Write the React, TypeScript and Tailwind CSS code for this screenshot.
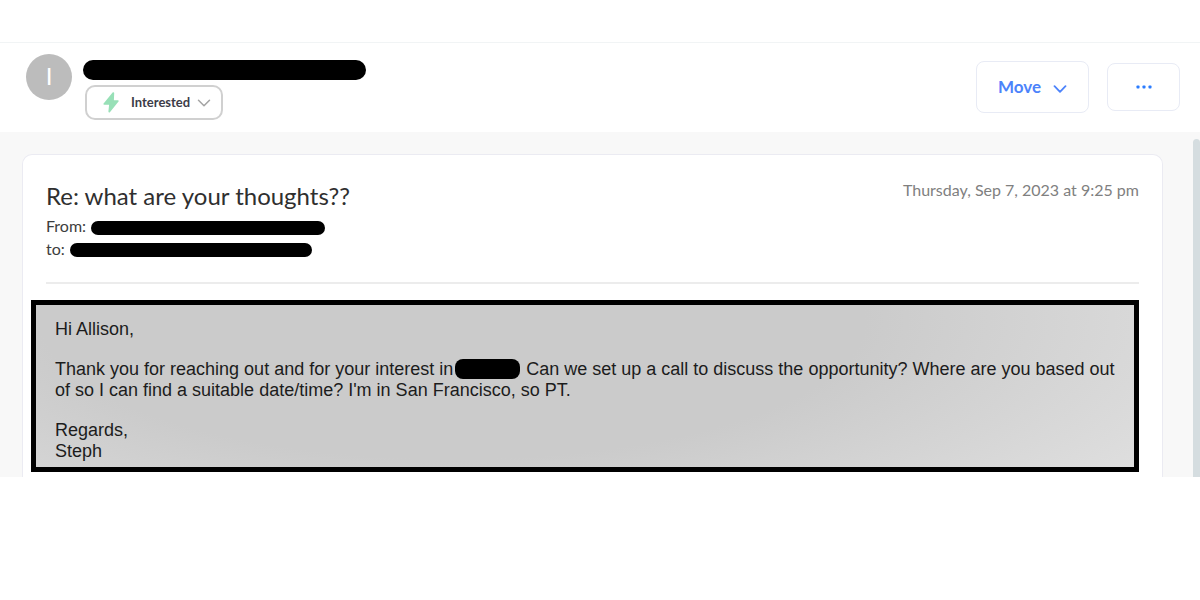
import type { ReactNode } from "react";

function Redacted({ className }: { className: string }) {
  return <span aria-label="Redacted" role="img" className={`inline-block bg-black ${className}`} />;
}

function Chevron({ className }: { className: string }) {
  return (
    <svg viewBox="0 0 14 8" fill="none" stroke="currentColor" strokeLinecap="round" strokeLinejoin="round" className={className} aria-hidden="true">
      <path d="M1.5 1.2 7 6.8l5.5-5.6" />
    </svg>
  );
}

function Header() {
  return (
    <header className="flex h-[90px] items-start justify-between border-t border-[#f1f4f5] pr-5 pl-[26px]">
      <div className="flex items-start pt-[11px]">
        <div className="flex size-[46px] items-center justify-center rounded-full bg-[#bcbcbc] pb-0.5 text-2xl text-white">I</div>
        <div className="ml-[11px] flex flex-col items-start pt-[6px]">
          <Redacted className="h-5 w-[283px] rounded-full" />
          <button
            type="button"
            className="mt-[5px] ml-0.5 flex h-[35px] items-center rounded-[10px] border-2 border-[#d0d0d0] bg-white pr-[10px] pl-4 text-[13px] font-bold text-[#3c3c48]"
          >
            <svg viewBox="0 0 16 21" className="h-[21px] w-4" aria-hidden="true">
              <path
                d="M9.6.6.6 11.4c-.5.7-.2 1.4.6 1.4h4.9L5.4 19.6c0 1 .9 1.3 1.5.6l8.6-10.6c.5-.7.2-1.4-.6-1.4h-4L11.2 1.2C11.3.2 10.2-.1 9.6.6Z"
                fill="#98e0b7"
              />
            </svg>
            <span className="ml-3">Interested</span>
            <Chevron className="ml-[7px] h-2 w-3.5 stroke-[1.5] text-[#a4a4a4]" />
          </button>
        </div>
      </div>
      <div className="flex items-center gap-[18px] pt-[18px]">
        <button
          type="button"
          className="flex h-[52px] w-[113px] items-center justify-center gap-3 rounded-lg border border-[#e8ebf5] bg-white text-[17px] font-bold text-[#4c83fb]"
        >
          Move
          <Chevron className="mt-1 h-2 w-3.5 stroke-[1.8]" />
        </button>
        <button
          type="button"
          aria-label="More actions"
          className="flex h-12 w-[73px] items-center justify-center rounded-lg border border-[#e8ebf5] bg-white text-[#2b7cff]"
        >
          <svg viewBox="0 0 16 4" fill="currentColor" className="h-1 w-4" aria-hidden="true">
            <rect x="0.5" y="0.5" width="3" height="3" rx="0.8" />
            <rect x="6.5" y="0.5" width="3" height="3" rx="0.8" />
            <rect x="12.5" y="0.5" width="3" height="3" rx="0.8" />
          </svg>
        </button>
      </div>
    </header>
  );
}

function Recipient({ label, children }: { label: string; children: ReactNode }) {
  return (
    <div className="flex h-[23px] items-center gap-[5px] text-base text-[#3d3d3d]">
      <span>{label}</span>
      {children}
    </div>
  );
}

export default function App() {
  return (
    <div className="bg-white pt-[42px] font-['Lato','Open_Sans',sans-serif]">
      <Header />
      <main className="flex items-stretch bg-[#f8f8f8] pl-[22px]">
        <article className="mt-[22px] min-w-0 flex-1 rounded-t-[10px] border border-b-0 border-[#ebebf2] bg-white pr-[23px] pb-[5px]">
          <div className="ml-[23px] border-b-2 border-[#ececec] pt-[25px] pb-[22px]">
            <div className="flex items-start justify-between">
              <h1 className="pb-0.5 text-2xl leading-8 text-[#2f2f2f]">Re: what are your thoughts??</h1>
              <time dateTime="2023-09-07T21:25" className="text-base leading-5 text-[#808080]">
                Thursday, Sep 7, 2023 at 9:25 pm
              </time>
            </div>
            <Recipient label="From:">
              <Redacted className="mt-1 h-3.5 w-[234px] rounded-full" />
            </Recipient>
            <Recipient label="to:">
              <Redacted className="mt-0.5 h-3.5 w-[242px] rounded-full" />
            </Recipient>
          </div>
          <div className="mt-4 ml-2 space-y-[19px] border-[5px] border-black bg-[#cbcbcb] bg-[radial-gradient(ellipse_75%_170%_at_38%_10%,#cbcbcb_50%,#dfdfdf_100%)] pt-[14px] pr-3 pb-[5px] pl-[19px] font-['Liberation_Sans',Arial,sans-serif] text-lg leading-[21px] text-[#1c1c1c]">
            <p>Hi Allison,</p>
            <p>
              Thank you for reaching out and for your interest in
              <Redacted className="mr-1.5 ml-0.5 -mt-1 h-5 w-[65px] rounded-lg align-[-4px]" />
              Can we set up a call to discuss the opportunity? Where are you based out of so I can find a suitable date/time? I'm in San Francisco, so PT.
            </p>
            <p>
              Regards,
              <br />
              Steph
            </p>
          </div>
        </article>
        <div className="mt-[7px] ml-[30px] w-[7px] rounded-t-full bg-[#d5dde0]" />
      </main>
    </div>
  );
}
